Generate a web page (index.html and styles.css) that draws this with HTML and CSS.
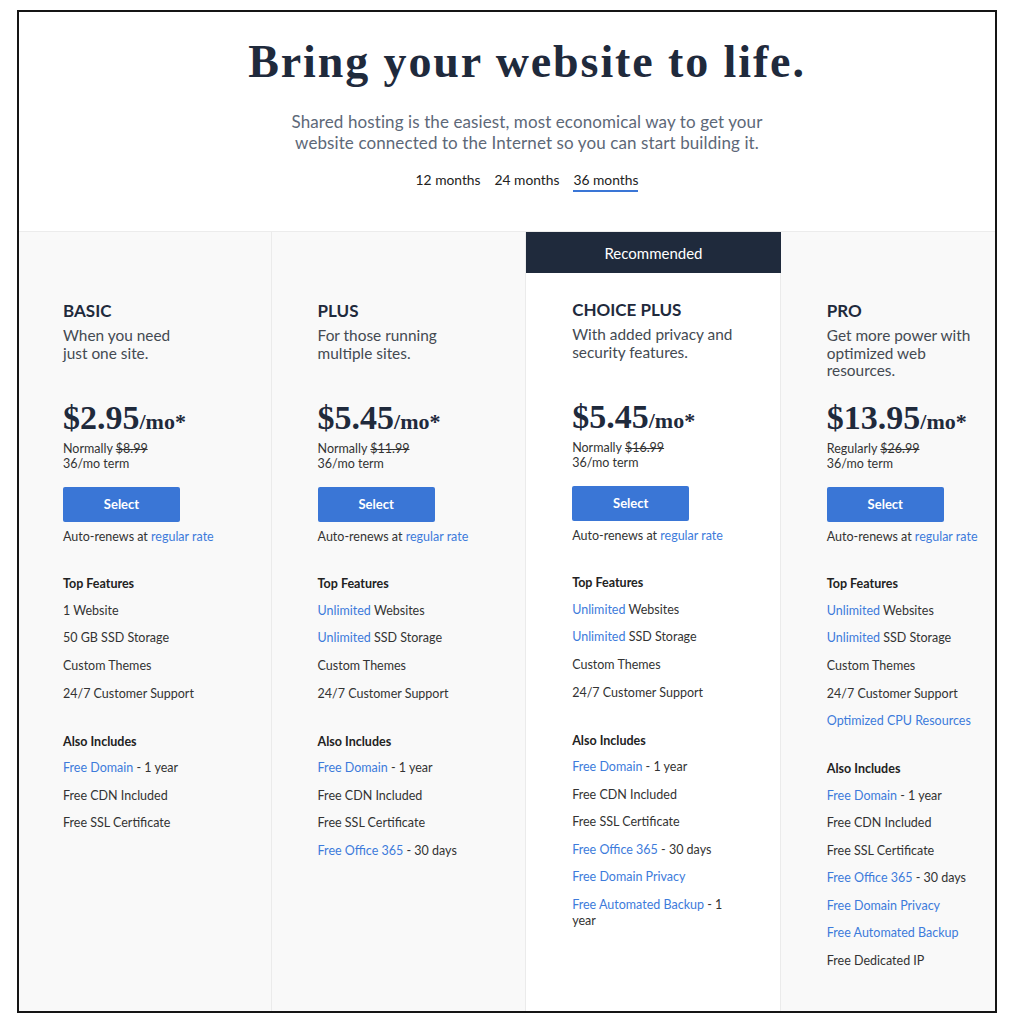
FILE: index.html
```html
<!DOCTYPE html>
<html lang="en">
<head>
<meta charset="utf-8">
<title>Shared Hosting Plans</title>
<link rel="stylesheet" href="styles.css">
</head>
<body>
<div class="frame">
  <div class="page">
    <header class="hero">
      <h1 class="hero-title">Bring your website to life.</h1>
      <p class="hero-sub">Shared hosting is the easiest, most economical way to get your<br>website connected to the Internet so you can start building it.</p>
      <nav class="terms">
        <span class="term">12 months</span>
        <span class="term">24 months</span>
        <span class="term term-active">36 months</span>
      </nav>
    </header>

    <section class="plans">
      <article class="plan">
        <div class="plan-flag"></div>
        <div class="plan-body">
          <h2 class="plan-name">BASIC</h2>
          <p class="plan-desc">When you need<br>just one site.</p>
          <div class="price"><span class="price-amt">$2.95</span><span class="price-unit">/mo*</span></div>
          <p class="price-note">Normally <s>$8.99</s><br>36/mo term</p>
          <button class="select-btn">Select</button>
          <p class="renew">Auto-renews at <a class="link">regular rate</a></p>
          <h3 class="feat-head">Top Features</h3>
          <ul class="feat-list">
            <li>1 Website</li>
            <li>50 GB SSD Storage</li>
            <li>Custom Themes</li>
            <li>24/7 Customer Support</li>
          </ul>
          <h3 class="feat-head">Also Includes</h3>
          <ul class="feat-list feat-list-also">
            <li><a class="link">Free Domain</a> - 1 year</li>
            <li>Free CDN Included</li>
            <li>Free SSL Certificate</li>
          </ul>
        </div>
      </article>

      <article class="plan">
        <div class="plan-flag"></div>
        <div class="plan-body">
          <h2 class="plan-name">PLUS</h2>
          <p class="plan-desc">For those running<br>multiple sites.</p>
          <div class="price"><span class="price-amt">$5.45</span><span class="price-unit">/mo*</span></div>
          <p class="price-note">Normally <s>$11.99</s><br>36/mo term</p>
          <button class="select-btn">Select</button>
          <p class="renew">Auto-renews at <a class="link">regular rate</a></p>
          <h3 class="feat-head">Top Features</h3>
          <ul class="feat-list">
            <li><a class="link">Unlimited</a> Websites</li>
            <li><a class="link">Unlimited</a> SSD Storage</li>
            <li>Custom Themes</li>
            <li>24/7 Customer Support</li>
          </ul>
          <h3 class="feat-head">Also Includes</h3>
          <ul class="feat-list feat-list-also">
            <li><a class="link">Free Domain</a> - 1 year</li>
            <li>Free CDN Included</li>
            <li>Free SSL Certificate</li>
            <li><a class="link">Free Office 365</a> - 30 days</li>
          </ul>
        </div>
      </article>

      <article class="plan plan-featured">
        <div class="plan-flag">Recommended</div>
        <div class="plan-body">
          <h2 class="plan-name">CHOICE PLUS</h2>
          <p class="plan-desc">With added privacy and<br>security features.</p>
          <div class="price"><span class="price-amt">$5.45</span><span class="price-unit">/mo*</span></div>
          <p class="price-note">Normally <s>$16.99</s><br>36/mo term</p>
          <button class="select-btn">Select</button>
          <p class="renew">Auto-renews at <a class="link">regular rate</a></p>
          <h3 class="feat-head">Top Features</h3>
          <ul class="feat-list">
            <li><a class="link">Unlimited</a> Websites</li>
            <li><a class="link">Unlimited</a> SSD Storage</li>
            <li>Custom Themes</li>
            <li>24/7 Customer Support</li>
          </ul>
          <h3 class="feat-head">Also Includes</h3>
          <ul class="feat-list feat-list-also">
            <li><a class="link">Free Domain</a> - 1 year</li>
            <li>Free CDN Included</li>
            <li>Free SSL Certificate</li>
            <li><a class="link">Free Office 365</a> - 30 days</li>
            <li><a class="link">Free Domain Privacy</a></li>
            <li><a class="link">Free Automated Backup</a> - 1 year</li>
          </ul>
        </div>
      </article>

      <article class="plan">
        <div class="plan-flag"></div>
        <div class="plan-body">
          <h2 class="plan-name">PRO</h2>
          <p class="plan-desc">Get more power with<br>optimized web<br>resources.</p>
          <div class="price"><span class="price-amt">$13.95</span><span class="price-unit">/mo*</span></div>
          <p class="price-note">Regularly <s>$26.99</s><br>36/mo term</p>
          <button class="select-btn">Select</button>
          <p class="renew">Auto-renews at <a class="link">regular rate</a></p>
          <h3 class="feat-head">Top Features</h3>
          <ul class="feat-list">
            <li><a class="link">Unlimited</a> Websites</li>
            <li><a class="link">Unlimited</a> SSD Storage</li>
            <li>Custom Themes</li>
            <li>24/7 Customer Support</li>
            <li><a class="link">Optimized CPU Resources</a></li>
          </ul>
          <h3 class="feat-head">Also Includes</h3>
          <ul class="feat-list feat-list-also">
            <li><a class="link">Free Domain</a> - 1 year</li>
            <li>Free CDN Included</li>
            <li>Free SSL Certificate</li>
            <li><a class="link">Free Office 365</a> - 30 days</li>
            <li><a class="link">Free Domain Privacy</a></li>
            <li><a class="link">Free Automated Backup</a></li>
            <li>Free Dedicated IP</li>
          </ul>
        </div>
      </article>
    </section>
  </div>
</div>
</body>
</html>
```

FILE: styles.css
```css
* {
  box-sizing: border-box;
}

html, body {
  margin: 0;
  padding: 0;
  background: #ffffff;
}

body {
  font-family: Lato, "Liberation Sans", Arial, sans-serif;
  color: #333333;
}

.frame {
  position: relative;
  width: 980px;
  height: 1003px;
  margin: 10px 0 0 17px;
  overflow: hidden;
  background: #ffffff;
}

.frame::after {
  content: "";
  position: absolute;
  inset: 0;
  border: 2px solid #151515;
  pointer-events: none;
  z-index: 5;
}

.page {
  width: 1020px;
  height: 100%;
  display: flex;
  flex-direction: column;
  background: #ffffff;
}

/* ---------- hero ---------- */
.hero {
  display: flex;
  flex-direction: column;
  align-items: center;
  padding: 25px 0 39px;
  text-align: center;
}

.hero-title {
  margin: 0;
  font-family: "Liberation Serif", "Times New Roman", serif;
  font-weight: 700;
  font-size: 46px;
  line-height: 54px;
  color: #1f2a3c;
  letter-spacing: 1.9px;
}

.hero-sub {
  margin: 22px 0 0;
  font-size: 17px;
  line-height: 21px;
  color: #5d6878;
  letter-spacing: 0.1px;
}

.terms {
  display: flex;
  gap: 14px;
  margin-top: 18px;
}

.term {
  font-size: 13.8px;
  line-height: 18px;
  color: #222222;
  padding-bottom: 1px;
  border-bottom: 2px solid transparent;
}

.term-active {
  border-bottom-color: #3a76d6;
}

/* ---------- plans ---------- */
.plans {
  flex: 1;
  display: grid;
  grid-template-columns: repeat(4, 254.6px);
  border-top: 1px solid #ececec;
}

.plan {
  background: #f9f9f9;
  border-right: 1px solid #ebebeb;
  display: flex;
  flex-direction: column;
}

.plan-featured {
  background: #ffffff;
}

.plan-flag {
  height: 41px;
  display: flex;
  align-items: center;
  justify-content: center;
  font-size: 15px;
  color: #ffffff;
}

.plan-featured .plan-flag {
  background: #1f2a3c;
  margin-right: -1px;
}

.plan-body {
  padding: 28px 40px 0 46px;
}

.plan-featured .plan-body {
  padding-top: 27px;
}

.plan-name {
  margin: 0;
  font-size: 17px;
  line-height: 20px;
  font-weight: 700;
  color: #1f2a3c;
}

.plan-desc {
  margin: 6px 0 0;
  min-height: 54px;
  font-size: 15.4px;
  line-height: 17.5px;
  color: #444a52;
}

.price {
  margin-top: 20px;
  font-family: "Liberation Serif", "Times New Roman", serif;
  font-weight: 700;
  font-size: 34px;
  color: #1f2a3c;
  line-height: 34px;
  height: 34px;
  white-space: nowrap;
}

.price-amt {
  font-size: 34px;
}

.price-unit {
  font-size: 22px;
  line-height: 22px;
}

.price-note {
  margin: 6px 0 0;
  font-size: 12.5px;
  line-height: 15px;
  color: #333333;
}

.price-note s {
  text-decoration-thickness: 1px;
}

.select-btn {
  display: block;
  width: 117px;
  height: 35px;
  margin-top: 15.5px;
  border: none;
  border-radius: 2px;
  background: #3a76d6;
  color: #ffffff;
  font-family: Lato, "Liberation Sans", Arial, sans-serif;
  font-size: 13px;
  font-weight: 700;
  padding: 0;
}

.renew {
  margin: 7.5px 0 0;
  font-size: 12.5px;
  line-height: 15px;
  color: #333333;
}

.link {
  color: #3d7bdb;
  text-decoration: none;
}

.feat-head {
  margin: 32px 0 0;
  font-size: 12.5px;
  line-height: 15px;
  font-weight: 700;
  color: #222222;
}

.feat-list {
  list-style: none;
  margin: 0;
  padding: 0;
}

.feat-list li {
  margin-top: 11.7px;
  font-size: 12.5px;
  line-height: 16px;
  color: #333333;
}

.feat-list-also li {
  margin-top: 11.5px;
}
```
